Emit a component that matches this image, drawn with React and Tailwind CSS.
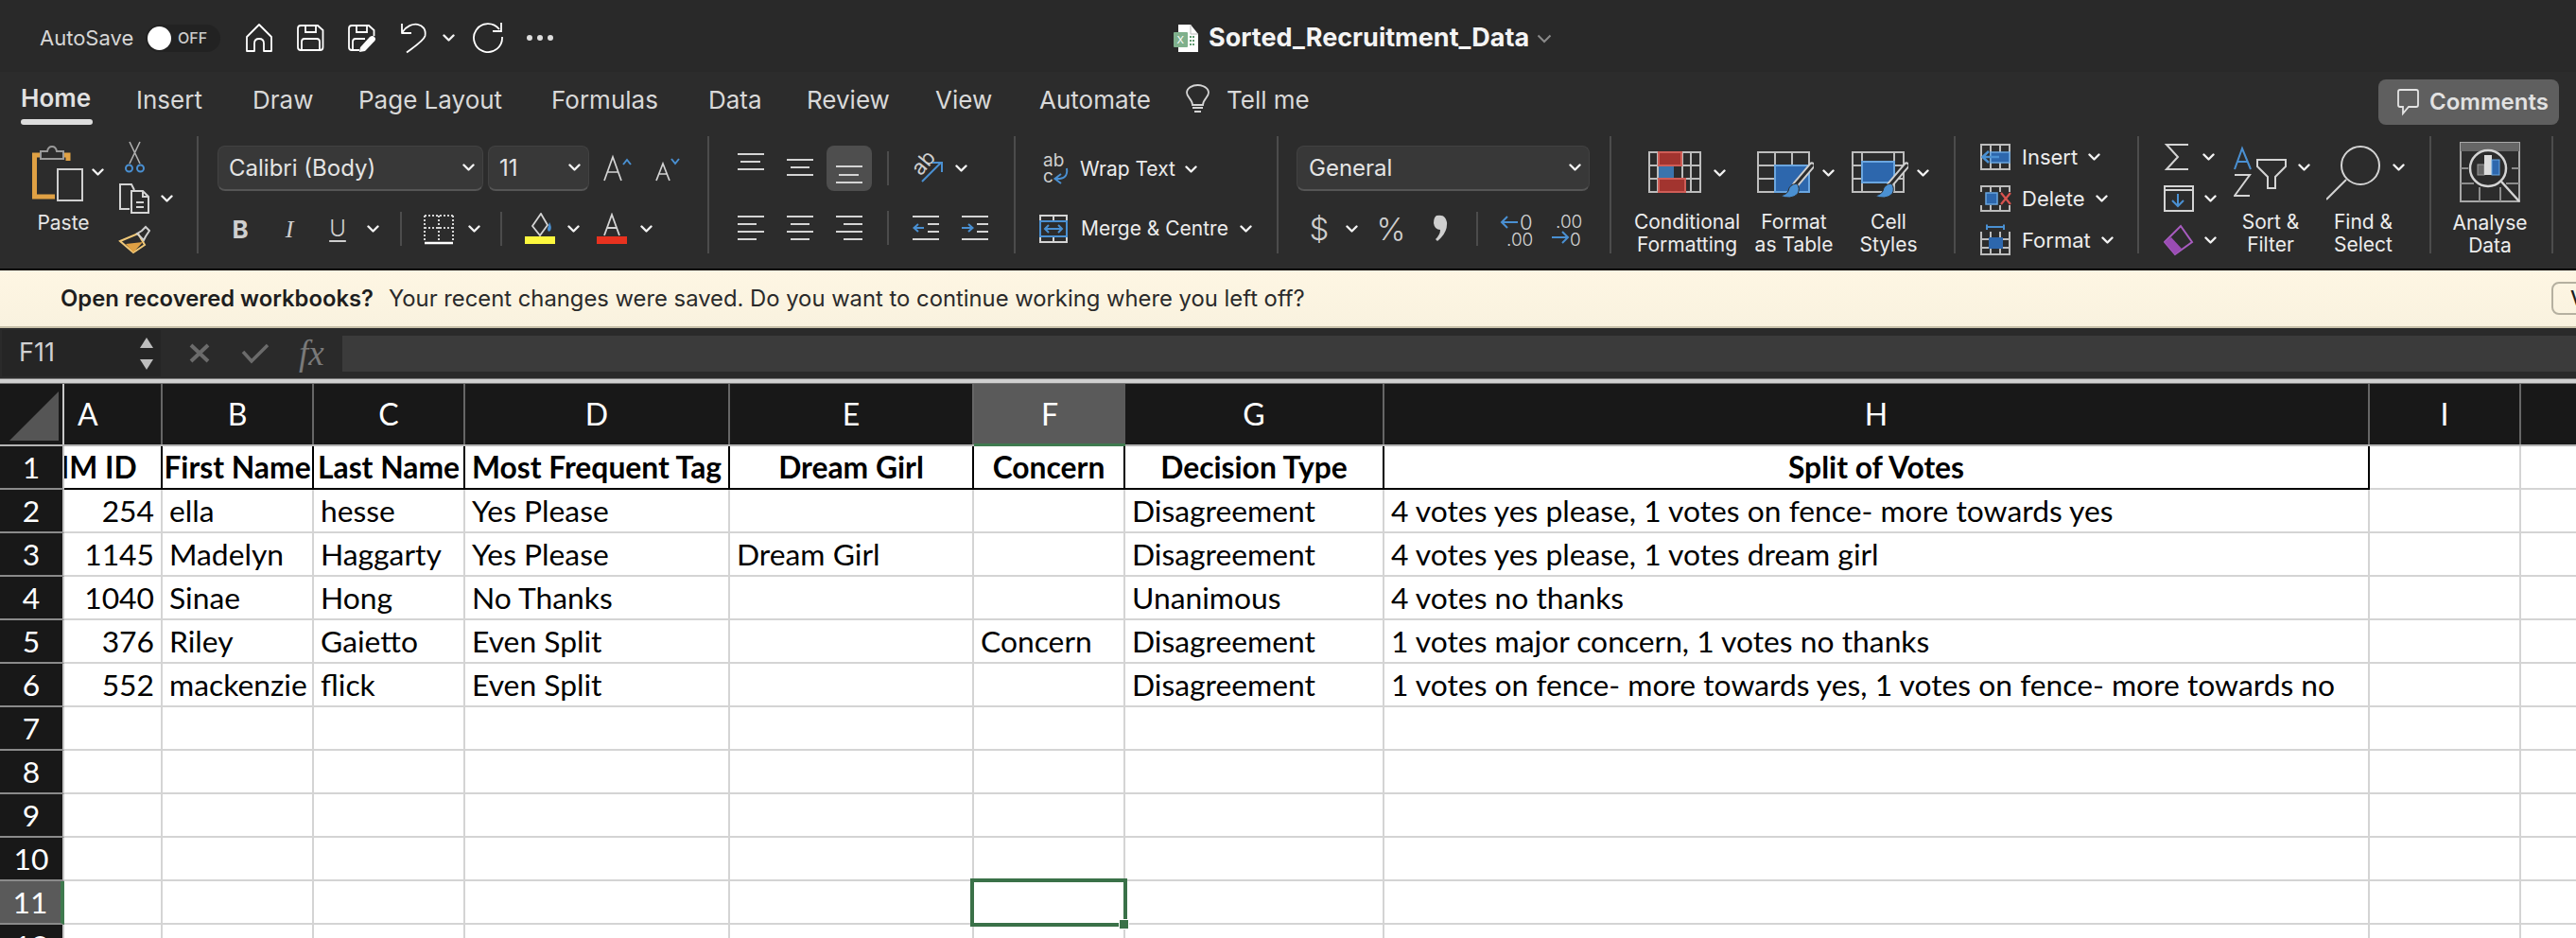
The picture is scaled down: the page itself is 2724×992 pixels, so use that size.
import React from 'react';

const Ico = ({ x, y, w, h, className = '', children }) => (
  <svg width={w} height={h} viewBox={`${x} ${y} ${w} ${h}`} fill="none" className={`shrink-0 block ${className}`}>
    {children}
  </svg>
);

const Chev = ({ className = '' }) => (
  <svg width="13" height="9" viewBox="0 0 13 9" fill="none" className={`shrink-0 block ${className}`}>
    <path d="M1.5 1.5 6.5 6.5 11.5 1.5" stroke="#f2f2f2" strokeWidth="2.4" strokeLinecap="round" strokeLinejoin="round" />
  </svg>
);

const Sep = ({ className = '' }) => <div className={`w-[2px] shrink-0 bg-[#4c4c4c] ${className}`} />;

const G = '#d4d4d4';
const B = '#4a90d2';

// horizontal line icons: [x1, x2, y]
const Lines = ({ x, y, w, h, ls, className = '' }) => (
  <Ico x={x} y={y} w={w} h={h} className={className}>
    {ls.map(([a, b, c]) => (
      <path key={`${a}-${c}`} d={`M${a} ${c}H${b}`} stroke={G} strokeWidth="2" />
    ))}
  </Ico>
);

function Select({ label, className = '' }) {
  return (
    <div className={`h-[48px] rounded-lg bg-[#383838] border border-[#424242] border-b-2 border-b-[#555] flex items-center shrink-0 ${className}`}>
      <span className="text-[#e4e4e4] text-[24px] whitespace-nowrap">{label}</span>
      <Chev className="ml-auto mr-[8px]" />
    </div>
  );
}

function TitleBar() {
  return (
    <div className="h-[76px] bg-[#292929] flex items-center pl-[42px] pt-[4px] text-[#d6d6d6]">
      <span className="w-[100px] text-[22px] whitespace-nowrap">AutoSave</span>
      <div className="ml-[12px] w-[79px] h-[29px] rounded-full bg-[#222] flex items-center pl-[2px]">
        <div className="w-[25px] h-[25px] rounded-full bg-white" />
        <span className="ml-[7px] text-[16px] font-medium text-[#ccc]">OFF</span>
      </div>
      <Ico x={259} y={23} w={30} h={32} className="ml-[26px]">
        <path d="M261 38 274 25 287 38V53H279V45Q279 40 274 40 269 40 269 45V53H261Z" stroke="#fff" strokeWidth="1.8" strokeLinejoin="round" />
      </Ico>
      <Ico x={314} y={25} w={29} h={30} className="ml-[25px]">
        <path d="M318 27H336L341.5 32V50Q341.5 53 338.500 53H318Q315 53 315 50V30Q315 27 318 27ZM323 27V34H334V27M319 53V44Q319 41 322 41H335Q338 41 338 44V53" stroke="#fff" strokeWidth="1.8" />
      </Ico>
      <Ico x={368} y={25} w={32} h={31} className="ml-[25px]">
        <path d="M380 53H372Q369 53 369 50V30Q369 27 372 27H390L395.500 32V38M377 27V34H388V27M373 53V44Q373 41 376 41H386" stroke="#fff" strokeWidth="1.8" />
        <path d="M381 50 391 39Q394 37 396 39 398 41 396.500 43L386 54 380 55Z" fill="#fff" />
      </Ico>
      <Ico x={423} y={23} w={29} h={34} className="ml-[23px]">
        <path d="M425 25V35H435M425.500 34C434 21 452 24 449.500 38 448 43 440 48 430 55.500" stroke="#fff" strokeWidth="1.8" strokeLinejoin="round" />
      </Ico>
      <Chev className="ml-[16px]" />
      <Ico x={499} y={23} w={34} h={34} className="ml-[18px]">
        <path d="M528 31A15 15 0 1 0 531 39M530 24V33H521" stroke="#fff" strokeWidth="1.8" />
      </Ico>
      <div className="ml-[24px] flex gap-[5px]">
        <div className="w-[6px] h-[6px] rounded-full bg-[#ddd]" />
        <div className="w-[6px] h-[6px] rounded-full bg-[#ddd]" />
        <div className="w-[6px] h-[6px] rounded-full bg-[#ddd]" />
      </div>
      <Ico x={1241} y={23} w={28} h={32} className="ml-[656px]">
        <path d="M1246 25H1259L1267 35V54H1246Z" fill="#fff" />
        <path d="M1259 25V35H1267" stroke="#bbb" strokeWidth="1" />
        <rect x="1241" y="33" width="15" height="16" rx="1" fill="#7fb08c" />
        <text x="1244.500" y="45" fontSize="11" fill="#fff" fontFamily="Inter">X</text>
        <path d="M1258 37h2v2h-2zM1261 37h2v2h-2zM1258 41h2v2h-2zM1261 41h2v2h-2zM1258 45h2v2h-2zM1261 45h2v2h-2z" fill="#5f9a70" />
      </Ico>
      <span className="ml-[9px] w-[338px] text-[27px] font-bold text-[#f4f4f4] whitespace-nowrap">Sorted_Recruitment_Data</span>
      <svg width="16" height="10" viewBox="0 0 16 10" fill="none" className="ml-[9px] mt-[2px]">
        <path d="M1.500 1.500 8 8 14.500 1.500" stroke="#8a8a8a" strokeWidth="2" />
      </svg>
    </div>
  );
}

function Tabs() {
  const tab = 'text-[26px] text-[#d9d9d9] whitespace-nowrap h-[56px] pt-[2px] flex items-center shrink-0';
  return (
    <div className="h-[56px] flex items-start">
      <div className="ml-[22px] w-[76px] shrink-0 flex flex-col">
        <span className="h-[50px] pt-[5px] flex items-center text-[26px] font-semibold text-[#e2e2e2]">Home</span>
        <div className="h-[6px] rounded-full bg-[#ddd]" />
      </div>
      <span className={`ml-[46px] w-[72px] ${tab}`}>Insert</span>
      <span className={`ml-[51px] w-[62px] ${tab}`}>Draw</span>
      <span className={`ml-[50px] w-[151px] ${tab}`}>Page Layout</span>
      <span className={`ml-[53px] w-[114px] ${tab}`}>Formulas</span>
      <span className={`ml-[52px] w-[56px] ${tab}`}>Data</span>
      <span className={`ml-[48px] w-[87px] ${tab}`}>Review</span>
      <span className={`ml-[49px] w-[60px] ${tab}`}>View</span>
      <span className={`ml-[50px] w-[118px] ${tab}`}>Automate</span>
      <Ico x={1254} y={88} w={26} h={34} className="ml-[37px] mt-[12px]">
        <path d="M1261 111C1261 105 1255 103 1255 98 1255 93 1261 90 1266.500 90 1272 90 1278 93 1278 98 1278 103 1272 105 1272 111Z" stroke="#d4d4d4" strokeWidth="1.800" />
        <path d="M1261 114H1272M1263 118H1270" stroke="#d4d4d4" strokeWidth="2" />
      </Ico>
      <span className={`ml-[17px] w-[86px] ${tab}`}>Tell me</span>
      <div className="ml-auto mr-[18px] mt-[8px] w-[191px] h-[48px] rounded-lg bg-[#5f5f5f] flex items-center pl-[19px] shrink-0">
        <Ico x={2533} y={95} w={25} h={30}>
          <path d="M2537 97H2554Q2556 97 2556 99V113Q2556 115 2554 115H2546L2540 122V115H2537Q2535 115 2535 113V99Q2535 97 2537 97Z" stroke="#e4e4e4" strokeWidth="1.800" />
        </Ico>
        <span className="ml-[10px] text-[24px] font-semibold text-[#e2e2e2] whitespace-nowrap">Comments</span>
      </div>
    </div>
  );
}

function ClipboardGroup() {
  return (
    <div className="w-[210px] shrink-0 border-r-2 border-[#4c4c4c] flex">
      <div className="w-[120px] shrink-0 flex flex-col">
        <div className="flex pl-[34px] mt-[10px]">
          <Ico x={34} y={154} w={56} h={61}>
            <path d="M72 170V164H36.500V208H58" stroke="#e0a144" strokeWidth="5" />
            <path d="M43 168V160H50Q51 155 55 155 59 155 60 160H67V168Z" fill="#2c2c2c" stroke="#9a9a9a" strokeWidth="2" />
            <rect x="61" y="179" width="26" height="33" stroke="#cfcfcf" strokeWidth="2" />
          </Ico>
          <Chev className="ml-[7px] mt-[24px]" />
        </div>
        <span className="w-[134px] mt-[5px] text-center text-[21px] text-[#e6e6e6]">Paste</span>
      </div>
      <div className="flex flex-col">
        <Ico x={130} y={148} w={26} h={36} className="ml-[10px] mt-[4px]">
          <path d="M137 150 148 173M148 150 137 173" stroke="#b0b0b0" strokeWidth="1.600" />
          <circle cx="136.500" cy="178" r="3.500" stroke={B} strokeWidth="2" />
          <circle cx="148.500" cy="178" r="3.500" stroke={B} strokeWidth="2" />
        </Ico>
        <div className="flex items-center mt-[9px]">
          <Ico x={125} y={193} w={34} h={34} className="ml-[5px]">
            <path d="M137 221H127V195H139L142 201" stroke={G} strokeWidth="2" />
            <path d="M139 202H151L157 208V225H139ZM151 202V208H157M144 214H152M144 219H152" stroke={G} strokeWidth="2" />
          </Ico>
          <Chev className="ml-[11px]" />
        </div>
        <Ico x={125} y={237} w={34} h={32} className="ml-[5px] mt-[10px]">
          <path d="M127 255 146 247 153 259 141 267Z" fill="#2c2c2c" stroke="#f0c878" strokeWidth="2" />
          <path d="M133 258 151 256 141 267Z" fill="#e0a144" />
          <path d="M145 247 150 244 154 240 158 244 154 250 152 254Z" stroke="#cfcfcf" strokeWidth="2" />
        </Ico>
      </div>
    </div>
  );
}

function FontGroup() {
  return (
    <div className="w-[540px] shrink-0 border-r-2 border-[#4c4c4c] flex flex-col">
      <div className="flex items-center mt-[10px] pl-[20px]">
        <Select label="Calibri (Body)" className="w-[281px] pl-[11px]" />
        <Select label="11" className="ml-[5px] w-[107px] pl-[11px]" />
        <Ico x={636} y={160} w={34} h={30} className="ml-[13px]">
          <path d="M639 188 648 163 657 188M642 179H654" stroke={G} strokeWidth="1.700" />
          <path d="M659 171 663 166 667 171" stroke={B} strokeWidth="2" />
        </Ico>
        <Ico x={692} y={160} w={30} h={30} className="ml-[22px]">
          <path d="M694 188 701 170 708 188M696 181H706" stroke={G} strokeWidth="1.700" />
          <path d="M710 165 714 170 718 165" stroke={B} strokeWidth="2" />
        </Ico>
      </div>
      <div className="flex items-center mt-[20px] pl-[34px] h-[40px]">
        <span className="w-[20px] text-center text-[26px] font-bold text-[#cfcfcf]">B</span>
        <span className="ml-[32px] w-[20px] text-center text-[26px] italic font-light text-[#cfcfcf] [font-family:'Liberation_Serif',serif]">I</span>
        <span className="ml-[30px] w-[22px] text-center text-[24px] font-light text-[#cfcfcf] underline underline-offset-[4px]">U</span>
        <Chev className="ml-[20px]" />
        <Sep className="ml-[22px] h-[36px]" />
        <Ico x={447} y={225} w={32} h={33} className="ml-[23px]">
          <path d="M448 227H478M448 227V254M478 227V254M463 227V254M448 240H478" stroke={G} strokeWidth="2" strokeDasharray="2 2" />
          <path d="M448 256H478" stroke="#fff" strokeWidth="2.500" />
        </Ico>
        <Chev className="ml-[15px]" />
        <Sep className="ml-[21px] h-[36px]" />
        <Ico x={554} y={225} w={33} h={34} className="ml-[24px]">
          <path d="M562 239 571 226 578 238 570 249Z" stroke={G} strokeWidth="1.800" />
          <path d="M580 235Q583 240 581 244 578 246 578 242Z" fill={B} />
          <rect x="554" y="250" width="32" height="8" fill="#fdf83e" />
        </Ico>
        <Chev className="ml-[12px]" />
        <Ico x={630} y={225} w={33} h={34} className="ml-[18px]">
          <path d="M638 249 646 227 654 249M641 241H651" stroke={G} strokeWidth="1.800" />
          <rect x="630" y="250" width="32" height="8" fill="#e8321f" />
        </Ico>
        <Chev className="ml-[13px]" />
      </div>
    </div>
  );
}

function AlignGroup() {
  return (
    <div className="w-[324px] shrink-0 border-r-2 border-[#4c4c4c] flex flex-col">
      <div className="flex items-center mt-[10px] h-[48px] pl-[30px]">
        <Lines x={780} y={154} w={28} h={48} ls={[[780, 808, 163], [783, 804, 171], [780, 808, 179]]} />
        <Lines x={832} y={154} w={28} h={48} ls={[[832, 860, 169], [836, 856, 177], [832, 860, 185]]} className="ml-[24px]" />
        <div className="ml-[14px] w-[48px] h-[48px] rounded-lg bg-[#4e4e4e] pl-[10px] shrink-0">
          <Lines x={884} y={154} w={28} h={48} ls={[[884, 912, 176], [887, 908, 185], [884, 912, 193]]} />
        </div>
        <Sep className="ml-[16px] h-[36px]" />
        <Ico x={962} y={160} w={38} h={34} className="ml-[22px]">
          <text x="966" y="181" fontSize="22" fontFamily="Inter" fill="#cfcfcf" transform="rotate(-50 975 175)">ab</text>
          <path d="M975 191 995 171M986 171H996V181" stroke={B} strokeWidth="2" />
        </Ico>
        <Chev className="ml-[10px]" />
      </div>
      <div className="flex items-center mt-[20px] h-[38px] pl-[30px]">
        <Lines x={780} y={222} w={28} h={38} ls={[[780, 808, 229], [780, 800, 237], [780, 808, 245], [780, 800, 253]]} />
        <Lines x={832} y={222} w={28} h={38} ls={[[832, 860, 229], [836, 856, 237], [832, 860, 245], [836, 856, 253]]} className="ml-[24px]" />
        <Lines x={884} y={222} w={28} h={38} ls={[[884, 912, 229], [892, 912, 237], [884, 912, 245], [892, 912, 253]]} className="ml-[24px]" />
        <Sep className="ml-[26px] h-[36px]" />
        <Ico x={966} y={222} w={28} h={38} className="ml-[25px]">
          <path d="M966 229H994M982 237H994M982 245H994M966 253H994" stroke={G} strokeWidth="2" />
          <path d="M978 241H968M972 237 967.500 241 972 245" stroke={B} strokeWidth="2" />
        </Ico>
        <Ico x={1018} y={222} w={28} h={38} className="ml-[24px]">
          <path d="M1018 229H1046M1034 237H1046M1034 245H1046M1018 253H1046" stroke={G} strokeWidth="2" />
          <path d="M1018 241H1029M1025 237 1029.500 241 1025 245" stroke={B} strokeWidth="2" />
        </Ico>
      </div>
    </div>
  );
}

function WrapGroup() {
  return (
    <div className="w-[278px] shrink-0 border-r-2 border-[#4c4c4c] flex flex-col text-[21px] text-[#ececec]">
      <div className="flex items-center mt-[16px] h-[38px] pl-[28px]">
        <Ico x={1102} y={162} w={30} h={34}>
          <text x="1103" y="176" fontSize="19" fontFamily="Inter" fill="#cfcfcf">ab</text>
          <text x="1103" y="193" fontSize="19" fontFamily="Inter" fill="#cfcfcf">c</text>
          <path d="M1128 178Q1130 190 1116 189M1122 184 1115.500 189 1122 194" stroke={B} strokeWidth="2" />
        </Ico>
        <span className="ml-[10px] w-[101px] whitespace-nowrap">Wrap Text</span>
        <Chev className="ml-[10px]" />
      </div>
      <div className="flex items-center mt-[25px] h-[38px] pl-[24px]">
        <Ico x={1097} y={225} w={32} h={33}>
          <path d="M1099 227H1127V255H1099ZM1113 227V233M1113 249V255" stroke={G} strokeWidth="2" />
          <rect x="1099" y="233" width="28" height="16" stroke={B} strokeWidth="2" />
          <path d="M1104 241H1122M1108 237 1104 241 1108 245M1118 237 1122 241 1118 245" stroke={B} strokeWidth="2" />
        </Ico>
        <span className="ml-[13px] w-[158px] whitespace-nowrap">Merge &amp; Centre</span>
        <Chev className="ml-[10px]" />
      </div>
    </div>
  );
}

function NumberGroup() {
  return (
    <div className="w-[352px] shrink-0 border-r-2 border-[#4c4c4c] flex flex-col">
      <div className="mt-[10px] pl-[19px]">
        <Select label="General" className="w-[310px] pl-[12px]" />
      </div>
      <div className="flex items-center mt-[20px] h-[40px] pl-[31px] text-[#cfcfcf]">
        <span className="w-[24px] text-[33px] font-light leading-none text-center">$</span>
        <Chev className="ml-[16px]" />
        <span className="ml-[18px] w-[34px] text-[33px] font-light leading-none text-center">%</span>
        <Ico x={1516} y={225} w={18} h={34} className="ml-[26px]">
          <path d="M1521 228Q1530 226 1532 235 1533 246 1522 255L1520 253Q1525 248 1525 243 1519 243 1518 236 1518 230 1521 228Z" fill="#cfcfcf" />
        </Ico>
        <Sep className="ml-[29px] h-[36px]" />
        <Ico x={1586} y={224} w={36} h={36} className="ml-[22px]">
          <path d="M1606 235H1589M1595 229 1589 235 1595 241" stroke={B} strokeWidth="2" />
          <text x="1608" y="243" fontSize="22" fontWeight="300" fontFamily="Inter" fill={G}>0</text>
          <text x="1594" y="260" fontSize="19" fontWeight="300" fontFamily="Inter" fill={G}>.00</text>
        </Ico>
        <Ico x={1640} y={224} w={36} h={36} className="ml-[18px]">
          <text x="1646" y="241" fontSize="19" fontWeight="300" fontFamily="Inter" fill={G}>.00</text>
          <path d="M1642 251H1659M1653 245 1659 251 1653 257" stroke={B} strokeWidth="2" />
          <text x="1661" y="260" fontSize="19" fontWeight="300" fontFamily="Inter" fill={G}>0</text>
        </Ico>
      </div>
    </div>
  );
}

const Big = ({ className = '', children }) => (
  <span className={`block text-center text-[21px] leading-[24px] text-[#ececec] whitespace-nowrap ${className}`}>{children}</span>
);

function Brush() {
  return (
    <>
      <path d="M0 0L-17 20" stroke="#cfcfcf" strokeWidth="7" strokeLinecap="round" />
      <path d="M0 0L-17 20" stroke="#2c2c2c" strokeWidth="3" strokeLinecap="round" />
      <path d="M-16 19Q-24 20 -25 27 -27 31 -34 32 -22 37 -15 30 -12 24 -16 19Z" fill={B} stroke="#2c2c2c" strokeWidth="1" />
    </>
  );
}

function StylesGroup() {
  return (
    <div className="w-[364px] shrink-0 border-r-2 border-[#4c4c4c] flex pl-[18px]">
      <div className="w-[124px] shrink-0 flex flex-col">
        <div className="flex items-center mt-[16px] h-[54px] pl-[21px]">
          <Ico x={1743} y={160} w={56} h={54}>
            <path d="M1744 161H1798V203H1744ZM1744 175H1798M1744 189H1798M1753 161V203M1779 161V203M1788 161V203" stroke="#bdbdbd" strokeWidth="2" />
            <rect x="1754" y="161" width="24" height="14" fill="#a2342f" stroke="#cf5d57" strokeWidth="2" />
            <rect x="1754" y="176" width="16" height="12" fill="#3a74ad" />
            <rect x="1754" y="189" width="28" height="14" fill="#a2342f" stroke="#cf5d57" strokeWidth="2" />
          </Ico>
          <Chev className="ml-[13px] mt-[-8px]" />
        </div>
        <Big className="mt-[9px]">Conditional<br />Formatting</Big>
      </div>
      <div className="ml-[5px] w-[92px] shrink-0 flex flex-col">
        <div className="flex items-center mt-[16px] h-[54px] pl-[7px]">
          <Ico x={1858} y={160} w={60} h={54}>
            <path d="M1859 161H1913V203H1859ZM1859 175H1913M1859 189H1913M1877 161V203M1895 161V203" stroke="#bdbdbd" strokeWidth="2" />
            <rect x="1877" y="175" width="36" height="28" fill="#2d67ad" stroke="#6aa6e0" strokeWidth="2" />
            <g transform="translate(1916 175)"><Brush /></g>
          </Ico>
          <Chev className="ml-[9px] mt-[-8px]" />
        </div>
        <Big className="mt-[9px]">Format<br />as Table</Big>
      </div>
      <div className="ml-[10px] w-[88px] shrink-0 flex flex-col">
        <div className="flex items-center mt-[16px] h-[54px] pl-[5px]">
          <Ico x={1958} y={160} w={60} h={54}>
            <path d="M1959 161H2013V203H1959ZM1959 175H2013M1959 189H2013M1969 161V203M2003 161V203" stroke="#bdbdbd" strokeWidth="2" />
            <rect x="1969" y="171" width="34" height="22" fill="#2d67ad" stroke="#6aa6e0" strokeWidth="2" />
            <g transform="translate(2016 175)"><Brush /></g>
          </Ico>
          <Chev className="ml-[9px] mt-[-8px]" />
        </div>
        <Big className="mt-[9px]">Cell<br />Styles</Big>
      </div>
    </div>
  );
}

function CellsGroup() {
  const row = 'h-[44px] shrink-0 flex items-center pl-[26px] text-[22px] text-[#ececec]';
  return (
    <div className="w-[194px] shrink-0 border-r-2 border-[#4c4c4c] flex flex-col">
      <div className={row}>
        <Ico x={2094} y={151} w={33} h={30}>
          <path d="M2095 153H2125V179H2095ZM2105 153V179M2115 153V179" stroke="#bdbdbd" strokeWidth="2" />
          <rect x="2105" y="161" width="20" height="11" fill="#2d67ad" stroke="#6aa6e0" strokeWidth="1.500" />
          <path d="M2114 166H2097M2103 160 2096.500 166 2103 172" stroke={B} strokeWidth="2.500" />
        </Ico>
        <span className="ml-[11px] w-[60px] whitespace-nowrap">Insert</span>
        <Chev className="ml-[10px]" />
      </div>
      <div className={row}>
        <Ico x={2094} y={195} w={33} h={30}>
          <path d="M2095 203V197H2125V203M2095 217V223H2125V217M2105 197V203M2115 197V203M2105 217V223M2115 217V223" stroke="#bdbdbd" strokeWidth="2" />
          <rect x="2100" y="204" width="12" height="12" fill="#2d67ad" stroke="#6aa6e0" strokeWidth="1.500" />
          <path d="M2116 204 2126 216M2126 204 2116 216" stroke="#d9534f" strokeWidth="2.200" />
        </Ico>
        <span className="ml-[11px] w-[68px] whitespace-nowrap">Delete</span>
        <Chev className="ml-[10px]" />
      </div>
      <div className={row}>
        <Ico x={2094} y={237} w={33} h={34}>
          <path d="M2095 245V269H2125V245M2095 253H2125M2095 262H2125M2105 245V269M2115 245V269" stroke="#bdbdbd" strokeWidth="2" />
          <rect x="2103" y="251" width="15" height="12" fill="#2d67ad" />
          <path d="M2101 240H2119M2101 237.500V243M2119 237.500V243" stroke={B} strokeWidth="2" />
        </Ico>
        <span className="ml-[11px] w-[74px] whitespace-nowrap">Format</span>
        <Chev className="ml-[10px]" />
      </div>
    </div>
  );
}

function EditGroup() {
  const row = 'h-[44px] shrink-0 flex items-center pl-[26px]';
  return (
    <div className="w-[309px] shrink-0 border-r-2 border-[#4c4c4c] flex">
      <div className="w-[94px] shrink-0 flex flex-col">
        <div className={row}>
          <Ico x={2290} y={150} w={30} h={32}>
            <path d="M2316 153H2293L2305 166 2293 179H2316" stroke={G} strokeWidth="2" />
          </Ico>
          <Chev className="ml-[11px]" />
        </div>
        <div className={row}>
          <Ico x={2288} y={195} w={32} h={30}>
            <path d="M2289 197H2319V223H2289ZM2289 201H2319" stroke={G} strokeWidth="2" />
            <path d="M2303 205V218M2297 212 2303 218 2309 212" stroke={B} strokeWidth="2" />
          </Ico>
          <Chev className="ml-[11px]" />
        </div>
        <div className={row}>
          <Ico x={2288} y={237} w={32} h={34}>
            <path d="M2306 239 2318 256 2300 269 2289 256Z" stroke="#a85cc0" strokeWidth="2" />
            <path d="M2296 251 2307 263 2300 269 2289 256Z" fill="#9a4cb4" />
          </Ico>
          <Chev className="ml-[11px]" />
        </div>
      </div>
      <div className="w-[90px] shrink-0 flex flex-col">
        <div className="flex items-center mt-[10px] h-[58px] pl-[6px]">
          <Ico x={2362} y={154} w={56} h={58}>
            <path d="M2363 179 2371 157 2380 179M2366 171H2377" stroke={B} strokeWidth="2" />
            <path d="M2363 185H2379L2363 207H2379" stroke={G} strokeWidth="2" />
            <path d="M2387 169H2417V176L2406 187V199H2398V187L2387 176Z" stroke={G} strokeWidth="2" />
          </Ico>
          <Chev className="ml-[12px] mt-[-12px]" />
        </div>
        <Big className="mt-[11px]">Sort &amp;<br />Filter</Big>
      </div>
      <div className="ml-[6px] w-[94px] shrink-0 flex flex-col">
        <div className="flex items-center mt-[10px] h-[58px] pl-[8px]">
          <Ico x={2460} y={154} w={58} h={58}>
            <circle cx="2496" cy="175" r="20" stroke={G} strokeWidth="2" />
            <path d="M2481 190 2460 211" stroke={G} strokeWidth="2" />
          </Ico>
          <Chev className="ml-[12px] mt-[-12px]" />
        </div>
        <Big className="mt-[11px]">Find &amp;<br />Select</Big>
      </div>
    </div>
  );
}

function AnalyseGroup() {
  return (
    <div className="w-[129px] shrink-0 border-r-2 border-[#4c4c4c] flex flex-col">
      <Ico x={2601} y={150} w={66} h={65} className="mt-[6px] ml-[30px]">
        <path d="M2602 151H2664V213H2602Z" stroke="#a8a8a8" strokeWidth="2" />
        <rect x="2602" y="151" width="62" height="9" fill="#666" />
        <path d="M2602 178H2610M2656 178H2664M2602 194H2616M2650 194H2664M2622 198V213M2644 198V213" stroke="#8c8c8c" strokeWidth="2" />
        <circle cx="2631" cy="178" r="19" fill="#2c2c2c" stroke={G} strokeWidth="2.500" />
        <rect x="2620" y="174" width="7" height="11" fill="#666" stroke="#999" strokeWidth="1" />
        <rect x="2627" y="164" width="8" height="21" fill="#ddd" />
        <rect x="2635" y="169" width="8" height="16" fill="#2d67ad" stroke="#6aa6e0" strokeWidth="1" />
        <path d="M2645 192 2664 213" stroke={G} strokeWidth="2.500" />
      </Ico>
      <Big className="mt-[9px] pr-[3px]">Analyse<br />Data</Big>
    </div>
  );
}

function Ribbon() {
  return (
    <div className="h-[208px] bg-[#2c2c2c]">
      <Tabs />
      <div className="flex h-[124px] mt-[12px]">
        <ClipboardGroup />
        <FontGroup />
        <AlignGroup />
        <WrapGroup />
        <NumberGroup />
        <StylesGroup />
        <CellsGroup />
        <EditGroup />
        <AnalyseGroup />
      </div>
    </div>
  );
}

function Banner() {
  return (
    <div className="h-[61px] bg-linear-to-b from-[#fef6e3] to-[#f9f2df] border-b-2 border-[#c6bfa8] flex items-center pl-[64px] pt-[1px] text-[23.8px] text-[#1e1e1e] overflow-hidden">
      <span className="font-semibold whitespace-nowrap">Open recovered workbooks?</span>
      <span className="ml-[16px] whitespace-nowrap text-[#2a2a2a]">Your recent changes were saved. Do you want to continue working where you left off?</span>
      <div className="ml-auto mr-[-34px] w-[60px] h-[35px] rounded-lg border-2 border-[#b5b0a0] pl-[18px] flex items-center shrink-0 font-medium mt-[-1px] text-[21px]">
        View
      </div>
    </div>
  );
}

function FormulaBar() {
  return (
    <div className="h-[53px] bg-[#2a2a2a] flex items-center">
      <div className="ml-[2px] w-[168px] h-[49px] bg-[#252525] flex items-center pl-[18px] shrink-0">
        <span className="text-[27px] text-[#d0d0d0]">F11</span>
        <div className="ml-auto mr-[8px] flex flex-col gap-[12px]">
          <svg width="14" height="11" viewBox="0 0 14 11"><path d="M7 0 14 11H0Z" fill="#bdbdbd" /></svg>
          <svg width="14" height="11" viewBox="0 0 14 11"><path d="M7 11 14 0H0Z" fill="#bdbdbd" /></svg>
        </div>
      </div>
      <Ico x={199} y={364} w={24} h={22} className="ml-[29px]">
        <path d="M202 366 220 383M220 366 202 383" stroke="#6b6b6b" strokeWidth="4" />
      </Ico>
      <Ico x={255} y={364} w={30} h={22} className="ml-[32px]">
        <path d="M257 373 266 383 283 366" stroke="#6b6b6b" strokeWidth="3.500" />
      </Ico>
      <span className="ml-[31px] w-[31px] italic text-[37px] leading-none text-[#7a7a7a] [font-family:'Liberation_Serif',serif] shrink-0">fx</span>
      <div className="ml-[15px] flex-1 h-[38px] bg-[#3b3b3b]" />
    </div>
  );
}

const colClass = 'grid grid-cols-[68px_104px_160px_160px_280px_258px_160px_274px_1042px_160px_58px]';
const letters = ['A', 'B', 'C', 'D', 'E', 'F', 'G', 'H', 'I'];

function HeaderRow() {
  return (
    <div className={`${colClass} h-[66px] bg-[#181818] border-b-2 border-[#b4b4b4]`}>
      <div className="border-r-2 border-[#c8c8c8] flex items-end">
        <svg width="52" height="52" viewBox="0 0 52 52" className="ml-[10px] mb-[4px]"><path d="M52 0V52H0Z" fill="#555" /></svg>
      </div>
      {letters.map((l) => {
        if (l === 'F') {
          return (
            <div key={l} className="bg-[#5a5a5a] border-b-[3px] border-[#3f7a4f] mb-[-2px] flex items-center justify-center text-[32px] text-white">{l}</div>
          );
        }
        return (
          <div key={l} className={`border-r-2 border-[#666] flex items-center text-[32px] text-white ${l === 'A' ? 'pl-[14px]' : 'justify-center'}`}>{l}</div>
        );
      })}
      <div />
    </div>
  );
}

const headers = ['PNM ID', 'First Name', 'Last Name', 'Most Frequent Tag', 'Dream Girl', 'Concern', 'Decision Type', 'Split of Votes'];

const rows = [
  ['254', 'ella', 'hesse', 'Yes Please', '', '', 'Disagreement', '4 votes yes please, 1 votes on fence- more towards yes'],
  ['1145', 'Madelyn', 'Haggarty', 'Yes Please', 'Dream Girl', '', 'Disagreement', '4 votes yes please, 1 votes dream girl'],
  ['1040', 'Sinae', 'Hong', 'No Thanks', '', '', 'Unanimous', '4 votes no thanks'],
  ['376', 'Riley', 'Gaietto', 'Even Split', '', 'Concern', 'Disagreement', '1 votes major concern, 1 votes no thanks'],
  ['552', 'mackenzie', 'flick', 'Even Split', '', '', 'Disagreement', '1 votes on fence- more towards yes, 1 votes on fence- more towards no'],
  ['', '', '', '', '', '', '', ''],
  ['', '', '', '', '', '', '', ''],
  ['', '', '', '', '', '', '', ''],
  ['', '', '', '', '', '', '', ''],
  ['', '', '', '', '', '', '', ''],
  ['', '', '', '', '', '', '', ''],
];

const cellFont = "[font-family:Lato,sans-serif] text-[31.8px] leading-[38px]";

function RowHead({ n, active }) {
  return (
    <div className={`border-b-2 border-b-[#8a8a8a] flex items-center justify-center text-white ${cellFont} ${active ? 'bg-[#5a5a5a] border-r-[4px] border-r-[#3f7a4f]' : 'bg-[#181818] border-r-2 border-r-[#c8c8c8]'}`}>
      {n}
    </div>
  );
}

function Sheet() {
  return (
    <div className="[font-family:Lato,sans-serif]">
      <HeaderRow />
      <div className={`${colClass} grid-rows-[46px] h-[46px] ${cellFont}`}>
        <RowHead n={1} />
        {headers.map((h, i) => (
          <div key={h} className={`border-r-2 border-b-2 border-black overflow-hidden whitespace-nowrap flex items-center font-bold text-black ${i === 0 ? 'pl-0' : 'justify-center'}`}>
            {i === 0 ? <span className="ml-[-39px]">{h}</span> : h}
          </div>
        ))}
        <div className="border-r-2 border-b-2 border-[#d4d4d4]" />
        <div className="border-b-2 border-[#d4d4d4]" />
      </div>
      {rows.map((r, ri) => (
        <div key={ri} className={`${colClass} grid-rows-[46px] h-[46px] ${cellFont}`}>
          <RowHead n={ri + 2} active={ri === 9} />
          {r.map((c, ci) => (
            <div key={ci} className={`relative border-r-2 border-b-2 border-[#d4d4d4] whitespace-nowrap flex items-center text-black ${ci === 0 ? 'justify-end pr-[7px]' : 'pl-[7px]'}`}>
              {c}
              {ri === 9 && ci === 5 && (
                <div className="absolute left-[-4px] top-[-3px] w-[166px] h-[51px] border-[4px] border-[#3a7148] z-10">
                  <div className="absolute right-[-6px] bottom-[-7px] w-[11px] h-[11px] bg-[#3a7148] border border-white" />
                </div>
              )}
            </div>
          ))}
          <div className="border-r-2 border-b-2 border-[#d4d4d4]" />
          <div className="border-b-2 border-[#d4d4d4]" />
        </div>
      ))}
    </div>
  );
}

export default function App() {
  return (
    <div className="w-[2724px] h-[992px] overflow-hidden bg-white [font-family:Inter,sans-serif]">
      <TitleBar />
      <Ribbon />
      <div className="h-[2px] bg-black" />
      <Banner />
      <FormulaBar />
      <div className="h-[6px] bg-[#d0d0d0] border-y border-[#777]" />
      <Sheet />
    </div>
  );
}
